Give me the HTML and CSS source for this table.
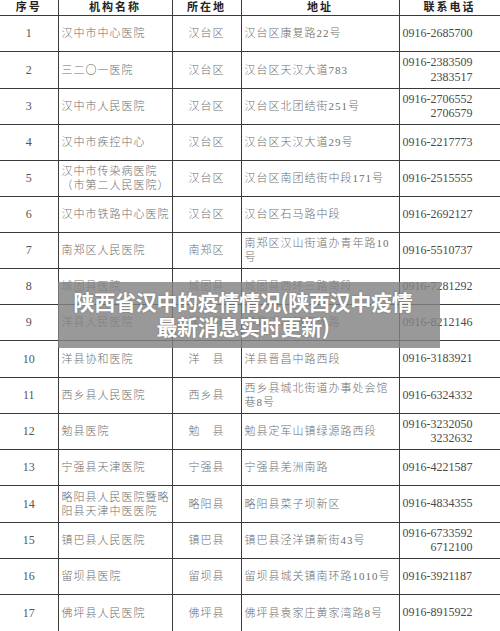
FILE: index.html
```html
<!DOCTYPE html>
<html lang="zh">
<head>
<meta charset="utf-8">
<link rel="stylesheet" href="styles.css">
</head>
<body>
<div class="page">
<table class="tbl">
<colgroup><col class="c1"><col class="c2"><col class="c3"><col class="c4"><col class="c5"></colgroup>
<thead>
<tr class="head"><th>序号</th><th>机构名称</th><th>所在地</th><th>地址</th><th>联系电话</th></tr>
</thead>
<tbody>
<tr><td class="no">1</td><td class="name">汉中市中心医院</td><td class="area">汉台区</td><td class="addr">汉台区康复路22号</td><td class="tel">0916-2685700</td></tr>
<tr class="tall"><td class="no">2</td><td class="name">三二〇一医院</td><td class="area">汉台区</td><td class="addr">汉台区天汉大道783</td><td class="tel"><span class="two">0916-2383509<br>2383517</span></td></tr>
<tr><td class="no">3</td><td class="name">汉中市人民医院</td><td class="area">汉台区</td><td class="addr">汉台区北团结街251号</td><td class="tel"><span class="two">0916-2706552<br>2706579</span></td></tr>
<tr><td class="no">4</td><td class="name">汉中市疾控中心</td><td class="area">汉台区</td><td class="addr">汉台区天汉大道29号</td><td class="tel">0916-2217773</td></tr>
<tr><td class="no">5</td><td class="name">汉中市传染病医院<br>（市第二人民医院）</td><td class="area">汉台区</td><td class="addr">汉台区南团结街中段171号</td><td class="tel">0916-2515555</td></tr>
<tr><td class="no">6</td><td class="name">汉中市铁路中心医院</td><td class="area">汉台区</td><td class="addr">汉台区石马路中段</td><td class="tel">0916-2692127</td></tr>
<tr><td class="no">7</td><td class="name">南郑区人民医院</td><td class="area">南郑区</td><td class="addr">南郑区汉山街道办青年路10<br>号</td><td class="tel">0916-5510737</td></tr>
<tr><td class="no">8</td><td class="name">城固县医院</td><td class="area">城固县</td><td class="addr">城固县西环三路南段</td><td class="tel">0916-7281292</td></tr>
<tr><td class="no">9</td><td class="name">洋县人民医院</td><td class="area">洋　县</td><td class="addr">洋县洋州镇南环路</td><td class="tel">0916-8212146</td></tr>
<tr class="tall"><td class="no">10</td><td class="name">洋县协和医院</td><td class="area">洋　县</td><td class="addr">洋县晋昌中路西段</td><td class="tel">0916-3183921</td></tr>
<tr><td class="no">11</td><td class="name">西乡县人民医院</td><td class="area">西乡县</td><td class="addr">西乡县城北街道办事处会馆<br>巷8号</td><td class="tel">0916-6324332</td></tr>
<tr><td class="no">12</td><td class="name">勉县医院</td><td class="area">勉　县</td><td class="addr">勉县定军山镇绿源路西段</td><td class="tel"><span class="two">0916-3232050<br>3232632</span></td></tr>
<tr><td class="no">13</td><td class="name">宁强县天津医院</td><td class="area">宁强县</td><td class="addr">宁强县羌洲南路</td><td class="tel">0916-4221587</td></tr>
<tr class="tall"><td class="no">14</td><td class="name">略阳县人民医院暨略<br>阳县天津中医医院</td><td class="area">略阳县</td><td class="addr">略阳县菜子坝新区</td><td class="tel">0916-4834355</td></tr>
<tr><td class="no">15</td><td class="name">镇巴县人民医院</td><td class="area">镇巴县</td><td class="addr">镇巴县泾洋镇新街43号</td><td class="tel"><span class="two">0916-6733592<br>6712100</span></td></tr>
<tr><td class="no">16</td><td class="name">留坝县医院</td><td class="area">留坝县</td><td class="addr">留坝县城关镇南环路1010号</td><td class="tel">0916-3921187</td></tr>
<tr class="tall"><td class="no">17</td><td class="name">佛坪县人民医院</td><td class="area">佛坪县</td><td class="addr">佛坪县袁家庄黄家湾路8号</td><td class="tel">0916-8915922</td></tr>
</tbody>
</table>
<div class="caption">陕西省汉中的疫情情况(陕西汉中疫情<br>最新消息实时更新)</div>
</div>
</body>
</html>
```
FILE: styles.css
```css
html, body {
  margin: 0;
  padding: 0;
  background: #fff;
}
.page {
  position: relative;
  width: 500px;
  height: 631px;
  overflow: hidden;
}
.tbl {
  width: 500px;
  border-collapse: collapse;
  table-layout: fixed;
  font-family: "Liberation Serif", "Noto Sans CJK SC", serif;
}
.c1 { width: 58px; }
.c2 { width: 114px; }
.c3 { width: 69px; }
.c4 { width: 158px; }
.c5 { width: 101px; }
.tbl th, .tbl td {
  border: 1px solid #3a3a3a;
  padding: 0 0 0 3px;
  vertical-align: middle;
}
.tbl tr > :first-child { border-left: none; }
.tbl tr > :last-child { border-right: 1px solid #3a3a3a; }
.tbl thead th { border-top: none; }
.head { height: 15px; }
.head th {
  font-family: "Liberation Serif", "Noto Sans CJK SC", serif;
  font-size: 11px;
  font-weight: 700;
  line-height: 13px;
  color: #222;
  letter-spacing: 2px;
  text-align: center;
  padding: 0;
}
.tbl tbody tr { height: 36px; }
.tbl tbody tr.tall { height: 37px; }
.tbl tbody td {
  font-size: 11px;
  line-height: 14px;
  color: #6e6e6e;
  letter-spacing: 1px;
  font-weight: 300;
}
.tbl tbody td.no {
  text-align: center;
  padding: 0;
  font-size: 12px;
  color: #555;
  letter-spacing: 0;
  font-weight: 400;
}
.tbl tbody td.area {
  text-align: center;
  padding: 0;
}
.tbl tbody td.tel {
  font-size: 12px;
  color: #4a4a4a;
  letter-spacing: 0;
  font-weight: 400;
  line-height: 14.5px;
}
.two {
  display: inline-block;
  text-align: right;
}
.caption {
  position: absolute;
  left: 58px;
  top: 282px;
  width: 382px;
  height: 66px;
  box-sizing: border-box;
  padding-top: 7px;
  padding-right: 12px;
  background: rgba(130, 130, 130, 0.82);
  color: #fff;
  font-family: "Noto Sans CJK SC", sans-serif;
  font-weight: 700;
  font-size: 21px;
  line-height: 25px;
  letter-spacing: -0.3px;
  text-align: center;
  text-shadow: 0 0 2px rgba(0,0,0,0.25);
}
```
